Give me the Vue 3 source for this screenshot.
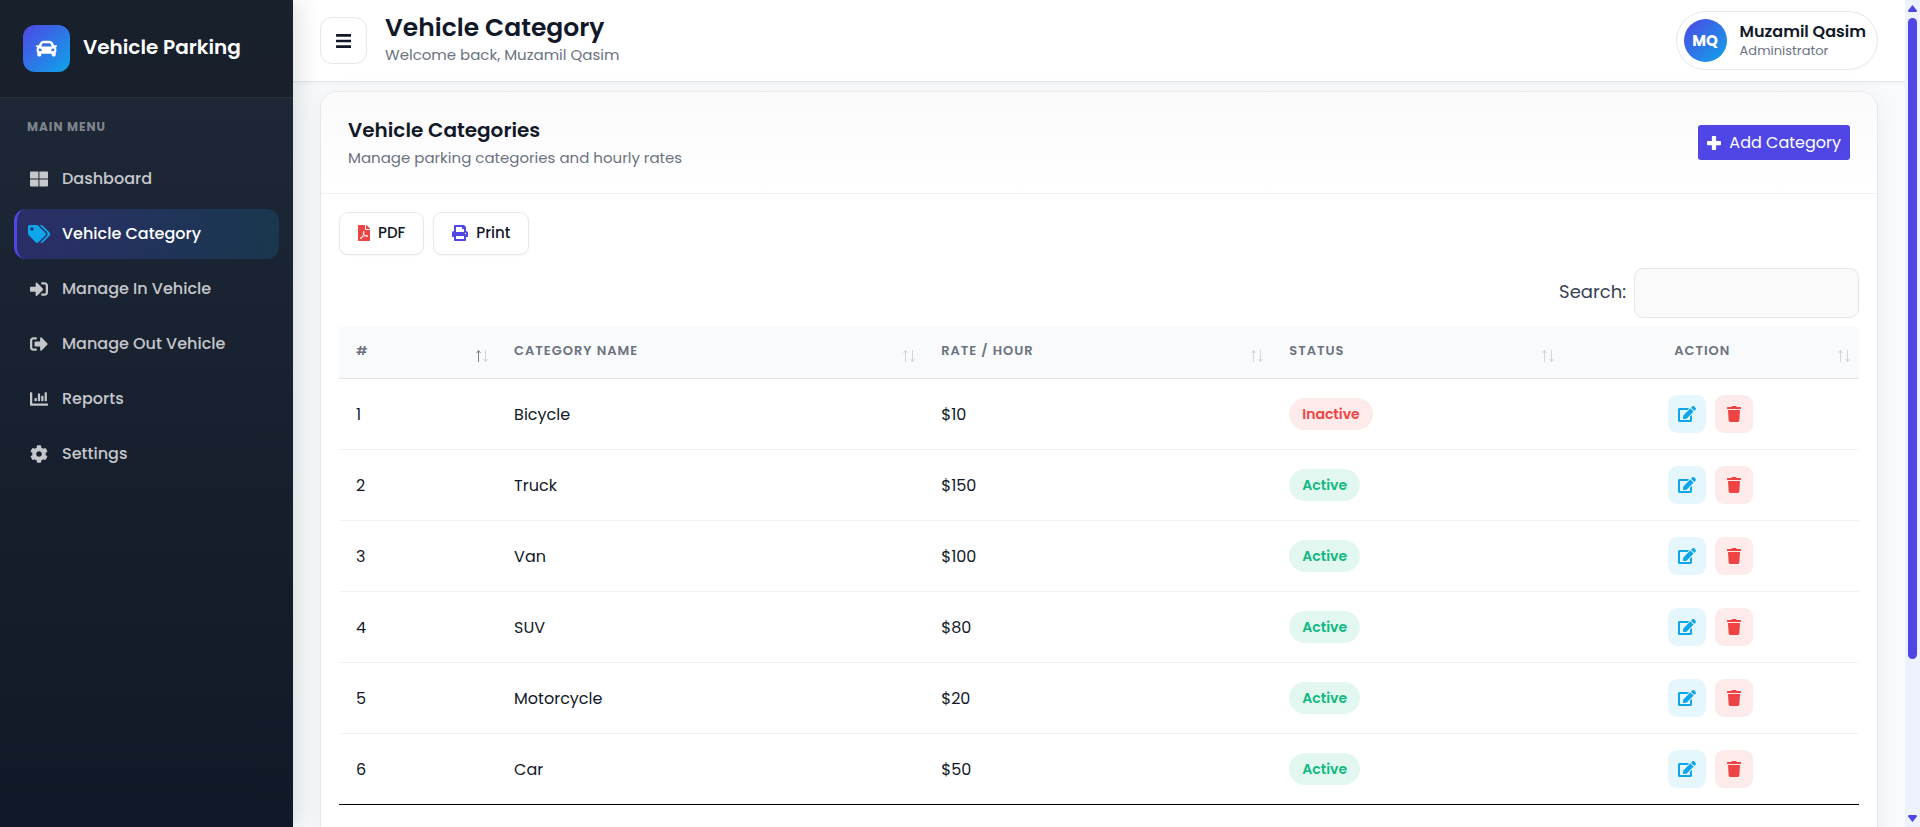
<template>
  <div class="app-shell">
    <aside class="sidebar">
      <div class="sidebar-brand">
        <span class="brand-logo">
          <svg class="icon-brand" :viewBox="icons.car.box"><path :d="icons.car.path" /></svg>
        </span>
        <span class="brand-name">Vehicle Parking</span>
      </div>
      <div class="menu-label">Main Menu</div>
      <nav class="menu">
        <a
          v-for="item in menu"
          :key="item.label"
          href="#"
          :class="['menu-item', { active: item.label === current }]"
          @click.prevent="current = item.label"
        >
          <span class="menu-icon">
            <svg :viewBox="icons[item.icon].box"><path :d="icons[item.icon].path" /></svg>
          </span>
          <span>{{ item.label }}</span>
        </a>
      </nav>
    </aside>

    <main class="main">
      <header class="topbar">
        <button type="button" class="toggle-btn" aria-label="Toggle menu">
          <svg :viewBox="icons.bars.box"><path :d="icons.bars.path" /></svg>
        </button>
        <div class="topbar-text">
          <h1>Vehicle Category</h1>
          <p>Welcome back, Muzamil Qasim</p>
        </div>
        <div class="profile">
          <span class="avatar">MQ</span>
          <div class="profile-text">
            <div class="profile-name">Muzamil Qasim</div>
            <div class="profile-role">Administrator</div>
          </div>
        </div>
      </header>

      <div class="content">
        <section class="card">
          <div class="card-header">
            <div>
              <h2>Vehicle Categories</h2>
              <p>Manage parking categories and hourly rates</p>
            </div>
            <button type="button" class="add-btn">
              <svg :viewBox="icons.plus.box"><path :d="icons.plus.path" /></svg>
              <span>Add Category</span>
            </button>
          </div>

          <div class="card-body">
            <div class="export-row">
              <button type="button" class="export-btn">
                <svg class="pdf" :viewBox="icons.pdf.box"><path :d="icons.pdf.path" /></svg>
                <span>PDF</span>
              </button>
              <button type="button" class="export-btn">
                <svg class="print" :viewBox="icons.print.box"><path :d="icons.print.path" /></svg>
                <span>Print</span>
              </button>
            </div>

            <div class="search-row">
              <label for="search">Search:</label>
              <input id="search" v-model="search" type="search" />
            </div>

            <table class="data-table">
              <thead>
                <tr>
                  <th v-for="col in columns" :key="col.key" :class="'col-' + col.key">
                    <div class="th-inner">
                      <span class="th-label">{{ col.label }}</span>
                      <svg class="sort" viewBox="0 0 14 14">
                        <path :class="{ on: col.key === 'id' }" d="M3.5 13V1.5M1.5 4L3.5 1.5L5.5 4" />
                        <path d="M10.5 1V12.5M8.5 10L10.5 12.5L12.5 10" />
                      </svg>
                    </div>
                  </th>
                </tr>
              </thead>
              <tbody>
                <tr v-for="row in filtered" :key="row.id">
                  <td>{{ row.id }}</td>
                  <td>{{ row.name }}</td>
                  <td>${{ row.rate }}</td>
                  <td>
                    <span :class="['badge', row.active ? 'badge-active' : 'badge-inactive']">
                      {{ row.active ? 'Active' : 'Inactive' }}
                    </span>
                  </td>
                  <td>
                    <div class="actions">
                      <button type="button" class="action-btn edit" :aria-label="'Edit ' + row.name">
                        <svg :viewBox="icons.edit.box"><path :d="icons.edit.path" /></svg>
                      </button>
                      <button type="button" class="action-btn delete" :aria-label="'Delete ' + row.name">
                        <svg :viewBox="icons.trash.box"><path :d="icons.trash.path" /></svg>
                      </button>
                    </div>
                  </td>
                </tr>
              </tbody>
            </table>
          </div>
        </section>
      </div>
    </main>

    <div class="scrollbar" aria-hidden="true">
      <svg viewBox="0 0 9 7"><path d="M4.5 0L9 5.5Q9 7 8 7H1Q0 7 0 5.5Z" /></svg>
      <div class="scroll-track"><div class="scroll-thumb"></div></div>
      <svg viewBox="0 0 9 7"><path d="M4.5 7L9 1.5Q9 0 8 0H1Q0 0 0 1.5Z" /></svg>
    </div>
  </div>
</template>

<script setup>
import { ref, computed } from 'vue'

const current = ref('Vehicle Category')
const search = ref('')

const menu = [
  { label: 'Dashboard', icon: 'grid' },
  { label: 'Vehicle Category', icon: 'tags' },
  { label: 'Manage In Vehicle', icon: 'signIn' },
  { label: 'Manage Out Vehicle', icon: 'signOut' },
  { label: 'Reports', icon: 'chart' },
  { label: 'Settings', icon: 'cog' },
]

const columns = [
  { key: 'id', label: '#' },
  { key: 'name', label: 'Category Name' },
  { key: 'rate', label: 'Rate / Hour' },
  { key: 'status', label: 'Status' },
  { key: 'action', label: 'Action' },
]

const rows = [
  { id: 1, name: 'Bicycle', rate: 10, active: false },
  { id: 2, name: 'Truck', rate: 150, active: true },
  { id: 3, name: 'Van', rate: 100, active: true },
  { id: 4, name: 'SUV', rate: 80, active: true },
  { id: 5, name: 'Motorcycle', rate: 20, active: true },
  { id: 6, name: 'Car', rate: 50, active: true },
]

const filtered = computed(() => {
  const q = search.value.trim().toLowerCase()
  return rows.filter((r) => r.name.toLowerCase().includes(q))
})

const icons = {
  car: {
    box: '0 0 512 512',
    path: 'M499.99 176h-59.87l-16.64-41.6C406.38 91.63 365.57 64 319.5 64h-127c-46.06 0-86.88 27.63-103.99 70.4L71.87 176H12.01C4.2 176-1.53 183.34.37 190.91l6 24C7.7 220.25 12.5 224 18.01 224h20.07C24.65 235.73 16 252.78 16 272v48c0 16.12 6.16 30.67 16 41.93V416c0 17.67 14.33 32 32 32h32c17.67 0 32-14.33 32-32v-32h256v32c0 17.67 14.33 32 32 32h32c17.67 0 32-14.33 32-32v-54.07c9.84-11.25 16-25.8 16-41.93v-48c0-19.22-8.65-36.27-22.07-48H494c5.51 0 10.31-3.75 11.64-9.09l6-24c1.89-7.57-3.84-14.91-11.65-14.91zm-352.06-17.83c7.29-18.22 24.94-30.17 44.57-30.17h127c19.63 0 37.28 11.95 44.57 30.17L384 208H128l19.93-49.83zM96 319.8c-19.2 0-32-12.76-32-31.9S76.8 256 96 256s48 28.71 48 47.85-28.8 15.95-48 15.95zm320 0c-19.2 0-48 3.19-48-15.95S396.8 256 416 256s32 12.76 32 31.9-12.8 31.9-32 31.9z',
  },
  grid: {
    box: '0 0 512 512',
    path: 'M24 40h216v202H0V64c0-13.3 10.7-24 24-24zM268 40h220c13.3 0 24 10.7 24 24v178H268zM0 270h240v202H24c-13.3 0-24-10.7-24-24zM268 270h244v178c0 13.3-10.7 24-24 24H268z',
  },
  tags: {
    box: '0 0 640 512',
    path: 'M497.941 225.941L286.059 14.059A48 48 0 0 0 252.118 0H48C21.49 0 0 21.49 0 48v204.118a48 48 0 0 0 14.059 33.941l211.882 211.882c18.744 18.745 49.136 18.746 67.882 0l204.118-204.118c18.745-18.745 18.745-49.137 0-67.882zM112 160c-26.51 0-48-21.49-48-48s21.49-48 48-48 48 21.49 48 48-21.49 48-48 48zm513.941 133.823L421.823 497.941c-18.745 18.745-49.137 18.745-67.882 0l-.36-.36L527.64 323.522c16.999-16.999 26.36-39.6 26.36-63.64s-9.362-46.641-26.36-63.64L331.397 0h48.721a48 48 0 0 1 33.941 14.059l211.882 211.882c18.745 18.745 18.745 49.137 0 67.882z',
  },
  signIn: {
    box: '0 0 512 512',
    path: 'M416 448h-84c-6.6 0-12-5.4-12-12v-40c0-6.6 5.4-12 12-12h84c17.7 0 32-14.3 32-32V160c0-17.7-14.3-32-32-32h-84c-6.6 0-12-5.4-12-12V76c0-6.6 5.4-12 12-12h84c53 0 96 43 96 96v192c0 53-43 96-96 96zm-47-201L201 79c-15-15-41-4.5-41 17v96H24c-13.3 0-24 10.7-24 24v96c0 13.3 10.7 24 24 24h136v96c0 21.5 26 32 41 17l168-168c9.3-9.4 9.3-24.6 0-34z',
  },
  signOut: {
    box: '0 0 512 512',
    path: 'M497 273L329 441c-15 15-41 4.5-41-17v-96H152c-13.3 0-24-10.7-24-24v-96c0-13.3 10.7-24 24-24h136V88c0-21.4 25.9-32 41-17l168 168c9.3 9.4 9.3 24.6 0 34zM192 436v-40c0-6.6-5.4-12-12-12H96c-17.7 0-32-14.3-32-32V160c0-17.7 14.3-32 32-32h84c6.6 0 12-5.4 12-12V76c0-6.6-5.4-12-12-12H96c-53 0-96 43-96 96v192c0 53 43 96 96 96h84c6.6 0 12-5.4 12-12z',
  },
  chart: {
    box: '0 0 512 512',
    path: 'M332.8 320h38.4c6.4 0 12.8-6.4 12.8-12.8V172.8c0-6.4-6.4-12.8-12.8-12.8h-38.4c-6.4 0-12.8 6.4-12.8 12.8v134.4c0 6.4 6.4 12.8 12.8 12.8zm96 0h38.4c6.4 0 12.8-6.4 12.8-12.8V76.8c0-6.4-6.4-12.8-12.8-12.8h-38.4c-6.4 0-12.8 6.4-12.8 12.8v230.4c0 6.4 6.4 12.8 12.8 12.8zm-288 0h38.4c6.4 0 12.8-6.4 12.8-12.8v-70.4c0-6.4-6.4-12.8-12.8-12.8h-38.4c-6.4 0-12.8 6.4-12.8 12.8v70.4c0 6.4 6.4 12.8 12.8 12.8zm96 0h38.4c6.4 0 12.8-6.4 12.8-12.8V108.8c0-6.4-6.4-12.8-12.8-12.8h-38.4c-6.4 0-12.8 6.4-12.8 12.8v198.4c0 6.4 6.4 12.8 12.8 12.8zM496 384H64V80c0-8.84-7.16-16-16-16H16C7.16 64 0 71.16 0 80v336c0 17.67 14.33 32 32 32h464c8.84 0 16-7.16 16-16v-32c0-8.84-7.16-16-16-16z',
  },
  cog: {
    box: '0 0 512 512',
    path: 'M487.4 315.7l-42.6-24.6c4.3-23.2 4.3-47 0-70.2l42.6-24.6c4.9-2.8 7.1-8.6 5.5-14-11.1-35.6-30-67.8-54.7-94.6-3.8-4.1-10-5.1-14.8-2.3L380.8 110c-17.9-15.4-38.5-27.3-60.8-35.1V25.8c0-5.6-3.9-10.5-9.4-11.7-36.7-8.2-74.3-7.8-109.2 0-5.5 1.2-9.4 6.1-9.4 11.7V75c-22.2 7.9-42.8 19.8-60.8 35.1L88.7 85.5c-4.9-2.8-11-1.9-14.8 2.3-24.7 26.7-43.6 58.9-54.7 94.6-1.7 5.4.6 11.2 5.5 14L67.3 221c-4.3 23.2-4.3 47 0 70.2l-42.6 24.6c-4.9 2.8-7.1 8.6-5.5 14 11.1 35.6 30 67.8 54.7 94.6 3.8 4.1 10 5.1 14.8 2.3l42.6-24.6c17.9 15.4 38.5 27.3 60.8 35.1v49.2c0 5.6 3.9 10.5 9.4 11.7 36.7 8.2 74.3 7.8 109.2 0 5.5-1.2 9.4-6.1 9.4-11.7v-49.2c22.2-7.9 42.8-19.8 60.8-35.1l42.6 24.6c4.9 2.8 11 1.9 14.8-2.3 24.7-26.7 43.6-58.9 54.7-94.6 1.5-5.5-.7-11.3-5.6-14.1zM256 336c-44.1 0-80-35.9-80-80s35.9-80 80-80 80 35.9 80 80-35.9 80-80 80z',
  },
  bars: {
    box: '0 0 448 512',
    path: 'M16 132h416c8.837 0 16-7.163 16-16V76c0-8.837-7.163-16-16-16H16C7.163 60 0 67.163 0 76v40c0 8.837 7.163 16 16 16zm0 160h416c8.837 0 16-7.163 16-16v-40c0-8.837-7.163-16-16-16H16c-8.837 0-16 7.163-16 16v40c0 8.837 7.163 16 16 16zm0 160h416c8.837 0 16-7.163 16-16v-40c0-8.837-7.163-16-16-16H16c-8.837 0-16 7.163-16 16v40c0 8.837 7.163 16 16 16z',
  },
  plus: {
    box: '0 0 448 448',
    path: 'M424 156H292V24c0-13.3-10.7-24-24-24h-88c-13.3 0-24 10.7-24 24v132H24c-13.3 0-24 10.7-24 24v88c0 13.3 10.7 24 24 24h132v132c0 13.3 10.7 24 24 24h88c13.3 0 24-10.7 24-24V292h132c13.3 0 24-10.7 24-24v-88c0-13.3-10.7-24-24-24z',
  },
  pdf: {
    box: '0 0 384 512',
    path: 'M181.9 256.1c-5-16-4.9-46.9-2-46.9 8.4 0 7.6 36.9 2 46.9zm-1.7 47.2c-7.7 20.2-17.3 43.3-28.4 62.7 18.3-7 39-17.2 62.9-21.9-12.7-9.6-24.9-23.4-34.5-40.8zM86.1 428.1c0 .8 13.2-5.4 34.9-40.2-6.7 6.3-29.1 24.5-34.9 40.2zM248 160h136v328c0 13.3-10.7 24-24 24H24c-13.3 0-24-10.7-24-24V24C0 10.7 10.7 0 24 0h200v136c0 13.2 10.8 24 24 24zm-8 171.8c-20-12.2-33.3-29-42.7-53.8 4.5-18.5 11.6-46.6 6.2-64.2-4.7-29.4-42.4-26.5-47.8-6.8-5 18.3-.4 44.1 8.1 77-11.6 27.6-28.7 64.6-40.8 85.8-.1 0-.1.1-.2.1-27.1 13.9-73.6 44.5-54.5 68 5.6 6.9 16 10 21.5 10 17.9 0 35.7-18 61.1-61.8 25.8-8.5 54.1-19.1 79-23.2 21.7 11.8 47.1 19.5 64 19.5 29.2 0 31.2-32 19.7-43.4-13.9-13.6-54.3-9.7-73.6-7.2zM377 105L279 7c-4.5-4.5-10.6-7-17-7h-6v128h128v-6.1c0-6.3-2.5-12.4-7-16.9zm-74.1 255.3c4.1-2.7-2.5-11.9-42.8-9 37.1 15.8 42.8 9 42.8 9z',
  },
  print: {
    box: '0 0 512 512',
    path: 'M448 192V77.25c0-8.49-3.37-16.62-9.37-22.63L393.37 9.37c-6-6-14.14-9.37-22.63-9.37H96C78.33 0 64 14.33 64 32v160c-35.35 0-64 28.65-64 64v112c0 8.84 7.16 16 16 16h48v96c0 17.67 14.33 32 32 32h320c17.67 0 32-14.33 32-32v-96h48c8.84 0 16-7.16 16-16V256c0-35.35-28.65-64-64-64zm-64 256H128v-96h256v96zm0-224H128V64h192v48c0 8.84 7.16 16 16 16h48v96zm48 72c-13.25 0-24-10.75-24-24 0-13.26 10.75-24 24-24s24 10.74 24 24c0 13.25-10.75 24-24 24z',
  },
  edit: {
    box: '0 0 576 512',
    path: 'M402.6 83.2l90.2 90.2c3.8 3.8 3.8 10 0 13.8L274.4 405.6l-92.8 10.3c-12.4 1.4-22.9-9.1-21.5-21.5l10.3-92.8L388.8 83.2c3.8-3.8 10-3.8 13.8 0zm162-22.9l-48.8-48.8c-15.2-15.2-39.9-15.2-55.2 0l-35.4 35.4c-3.8 3.8-3.8 10 0 13.8l90.2 90.2c3.8 3.8 10 3.8 13.8 0l35.4-35.4c15.2-15.3 15.2-40 0-55.2zM384 346.2V448H64V128h229.8c3.2 0 6.2-1.3 8.5-3.5l40-40c7.6-7.6 2.2-20.5-8.5-20.5H48C21.5 64 0 85.5 0 112v352c0 26.5 21.5 48 48 48h352c26.5 0 48-21.5 48-48V306.2c0-10.7-12.9-16-20.5-8.5l-40 40c-2.2 2.3-3.5 5.3-3.5 8.5z',
  },
  trash: {
    box: '0 0 448 512',
    path: 'M432 32H312l-9.4-18.7A24 24 0 0 0 281.1 0H166.8a23.72 23.72 0 0 0-21.4 13.3L136 32H16A16 16 0 0 0 0 48v32a16 16 0 0 0 16 16h416a16 16 0 0 0 16-16V48a16 16 0 0 0-16-16zM32 128L53.2 467a48 48 0 0 0 47.9 45h245.8a48 48 0 0 0 47.9-45L416 128z',
  },
}
</script>

<style>
body {
  margin: 0;
  overflow: hidden;
}
</style>

<style scoped>
.app-shell {
  --primary: #4f46e5;
  --info: #0ea5e9;
  --danger: #ef4444;
  --dark: #111827;
  --muted: #6b7280;
  --border: #e5e7eb;
  display: flex;
  height: 100vh;
  overflow: hidden;
  background: #f8fafc;
  color: var(--dark);
  font-family: Poppins, Inter, 'Open Sans', sans-serif;
  font-size: 16px;
}

.app-shell * {
  box-sizing: border-box;
}

h1,
h2,
p {
  margin: 0;
}

button,
input {
  font-family: inherit;
}

button {
  cursor: pointer;
}

svg {
  display: block;
  fill: currentColor;
}

.sidebar {
  position: relative;
  z-index: 2;
  flex: 0 0 293px;
  background: linear-gradient(180deg, #1f2937 0%, #111827 100%);
  box-shadow: 4px 0 24px rgba(0, 0, 0, 0.14);
}

.sidebar-brand {
  display: flex;
  align-items: center;
  gap: 13px;
  height: 98px;
  padding: 0 23px;
  background: rgba(0, 0, 0, 0.2);
  border-bottom: 1px solid rgba(255, 255, 255, 0.08);
}

.brand-logo {
  display: flex;
  align-items: center;
  justify-content: center;
  width: 47px;
  height: 47px;
  border-radius: 12px;
  background: linear-gradient(135deg, var(--primary), var(--info));
  color: #fff;
}

.icon-brand {
  width: 21px;
  height: 21px;
}

.brand-name {
  padding-bottom: 3px;
  color: #fff;
  font-size: 20px;
  font-weight: 600;
}

.menu-label {
  padding: 20px 27px 18px;
  color: rgba(255, 255, 255, 0.45);
  font-size: 12px;
  font-weight: 700;
  letter-spacing: 1px;
  line-height: 18px;
  text-transform: uppercase;
}

.menu {
  display: flex;
  flex-direction: column;
  gap: 5px;
  padding: 0 14px;
}

.menu-item {
  display: flex;
  align-items: center;
  gap: 13px;
  height: 50px;
  padding: 0 12px 1px;
  border-left: 3px solid transparent;
  border-radius: 12px;
  color: rgba(255, 255, 255, 0.75);
  font-size: 16px;
  font-weight: 500;
  text-decoration: none;
}

.menu-item.active {
  border-left-color: var(--primary);
  background: linear-gradient(90deg, rgba(79, 70, 229, 0.3), rgba(14, 165, 233, 0.15));
  color: #fff;
}

.menu-icon {
  display: flex;
  justify-content: center;
  width: 20px;
}

.menu-icon svg {
  flex: none;
  height: 18px;
}

.menu-item.active .menu-icon {
  color: var(--info);
}

.main {
  display: flex;
  flex: 1;
  flex-direction: column;
  min-width: 0;
}

.topbar {
  display: flex;
  flex: 0 0 82px;
  align-items: center;
  gap: 18px;
  padding: 0 27px;
  background: #fff;
  border-bottom: 1px solid var(--border);
  box-shadow: 0 1px 4px rgba(0, 0, 0, 0.05);
}

.toggle-btn {
  display: flex;
  align-items: center;
  justify-content: center;
  width: 47px;
  height: 47px;
  padding: 0;
  border: 1px solid var(--border);
  border-radius: 12px;
  background: #fff;
  color: var(--dark);
}

.toggle-btn svg {
  height: 18px;
}

.topbar-text {
  flex: 1;
  padding-bottom: 3px;
}

.topbar-text h1 {
  font-size: 25px;
  font-weight: 600;
  line-height: 32px;
}

.topbar-text p,
.card-header p {
  color: var(--muted);
  font-size: 15px;
  line-height: 22px;
}

.profile {
  display: flex;
  align-items: center;
  gap: 13px;
  height: 59px;
  padding: 0 11px 0 7px;
  border: 1px solid var(--border);
  border-radius: 30px;
}

.avatar {
  display: flex;
  align-items: center;
  justify-content: center;
  width: 43px;
  height: 43px;
  border-radius: 50%;
  background: linear-gradient(135deg, var(--primary), var(--info));
  color: #fff;
  font-size: 15px;
  font-weight: 700;
}

.profile-name {
  font-size: 16px;
  font-weight: 600;
  line-height: 20px;
}

.profile-role {
  color: var(--muted);
  font-size: 13px;
  line-height: 18px;
}

.content {
  padding: 9px 27px 27px;
}

.card {
  border: 1px solid var(--border);
  border-radius: 18px;
  background: #fff;
  box-shadow: 0 4px 24px rgba(0, 0, 0, 0.06);
  overflow: hidden;
}

.card-header {
  display: flex;
  align-items: center;
  justify-content: space-between;
  height: 102px;
  padding: 0 27px;
  border-bottom: 1px solid #f1f3f5;
  background: linear-gradient(180deg, #fafafa, #fff);
}

.card-header h2 {
  margin-bottom: 4px;
  font-size: 20px;
  font-weight: 600;
  line-height: 26px;
}

.add-btn {
  display: flex;
  align-items: center;
  gap: 8px;
  height: 35px;
  padding: 0 9px;
  border: 0;
  border-radius: 3px;
  background: var(--primary);
  color: #fff;
  font-size: 16px;
}

.add-btn svg {
  height: 14px;
}

.card-body {
  padding: 18px 18px 72px;
}

.export-row {
  display: flex;
  gap: 9px;
}

.export-btn {
  display: flex;
  align-items: center;
  gap: 8px;
  height: 43px;
  padding: 0 18px 2px;
  border: 1px solid var(--border);
  border-radius: 9px;
  background: #fff;
  box-shadow: 0 1px 2px rgba(0, 0, 0, 0.04);
  color: var(--dark);
  font-size: 15px;
  font-weight: 500;
}

.export-btn svg {
  height: 16px;
}

.pdf {
  color: var(--danger);
}

.print {
  color: var(--primary);
}

.search-row {
  display: flex;
  align-items: center;
  justify-content: flex-end;
  gap: 8px;
  margin: 13px 0 9px;
  font-size: 18px;
}

.search-row label {
  padding-bottom: 4px;
  color: #374151;
}

.search-row input {
  width: 225px;
  height: 50px;
  padding: 0 14px;
  border: 1px solid var(--border);
  border-radius: 9px;
  background: #fafafa;
  font-size: 16px;
}

.data-table {
  width: 100%;
  border-collapse: separate;
  border-spacing: 0;
  border-bottom: 1px solid #000;
  table-layout: fixed;
}

.col-id {
  width: 10.4%;
}

.col-name {
  width: 28.1%;
}

.col-rate {
  width: 22.9%;
}

.col-status {
  width: 19.1%;
}

.data-table th {
  height: 52px;
  padding: 0 8px 3px 17px;
  border-bottom: 1px solid #dfe3e8;
  background: #f9fafb;
  color: var(--muted);
  font-size: 13px;
  font-weight: 600;
  letter-spacing: 1px;
  text-align: left;
  text-transform: uppercase;
}

.th-inner {
  display: flex;
  align-items: flex-end;
}

.th-label {
  flex: 1;
  line-height: 24px;
}

.col-action .th-label {
  padding-right: 12px;
  text-align: center;
}

.sort {
  width: 14px;
  height: 14px;
  fill: none;
  stroke: #d1d5db;
}

.sort .on {
  stroke: #7c828c;
}

.data-table td {
  height: 71px;
  padding: 0 17px;
  border-bottom: 1px solid #f1f3f5;
}

.data-table tbody tr:last-child td {
  height: 70px;
  border-bottom: 0;
}

.badge {
  display: inline-block;
  padding: 0 13px;
  border-radius: 16px;
  font-size: 14px;
  font-weight: 600;
  line-height: 32px;
}

.badge-active {
  background: #e2f7f0;
  color: #10b981;
}

.badge-inactive {
  background: #fdeaea;
  color: var(--danger);
}

.actions {
  display: flex;
  justify-content: center;
  gap: 9px;
}

.action-btn {
  display: flex;
  align-items: center;
  justify-content: center;
  width: 38px;
  height: 38px;
  padding: 0;
  border: 0;
  border-radius: 9px;
}

.action-btn svg {
  height: 16px;
}

.edit {
  background: #e6f6fd;
  color: var(--info);
}

.delete {
  background: #fdeaea;
  color: var(--danger);
}

.scrollbar {
  display: flex;
  flex: 0 0 15px;
  flex-direction: column;
  align-items: center;
  gap: 6px;
  padding: 5px 0;
  background: #eef2ff;
  color: var(--primary);
}

.scrollbar svg {
  width: 9px;
  height: 7px;
}

.scroll-track {
  flex: 1;
  width: 9px;
}

.scroll-thumb {
  height: 81%;
  border-radius: 5px;
  background: var(--primary);
}
</style>
